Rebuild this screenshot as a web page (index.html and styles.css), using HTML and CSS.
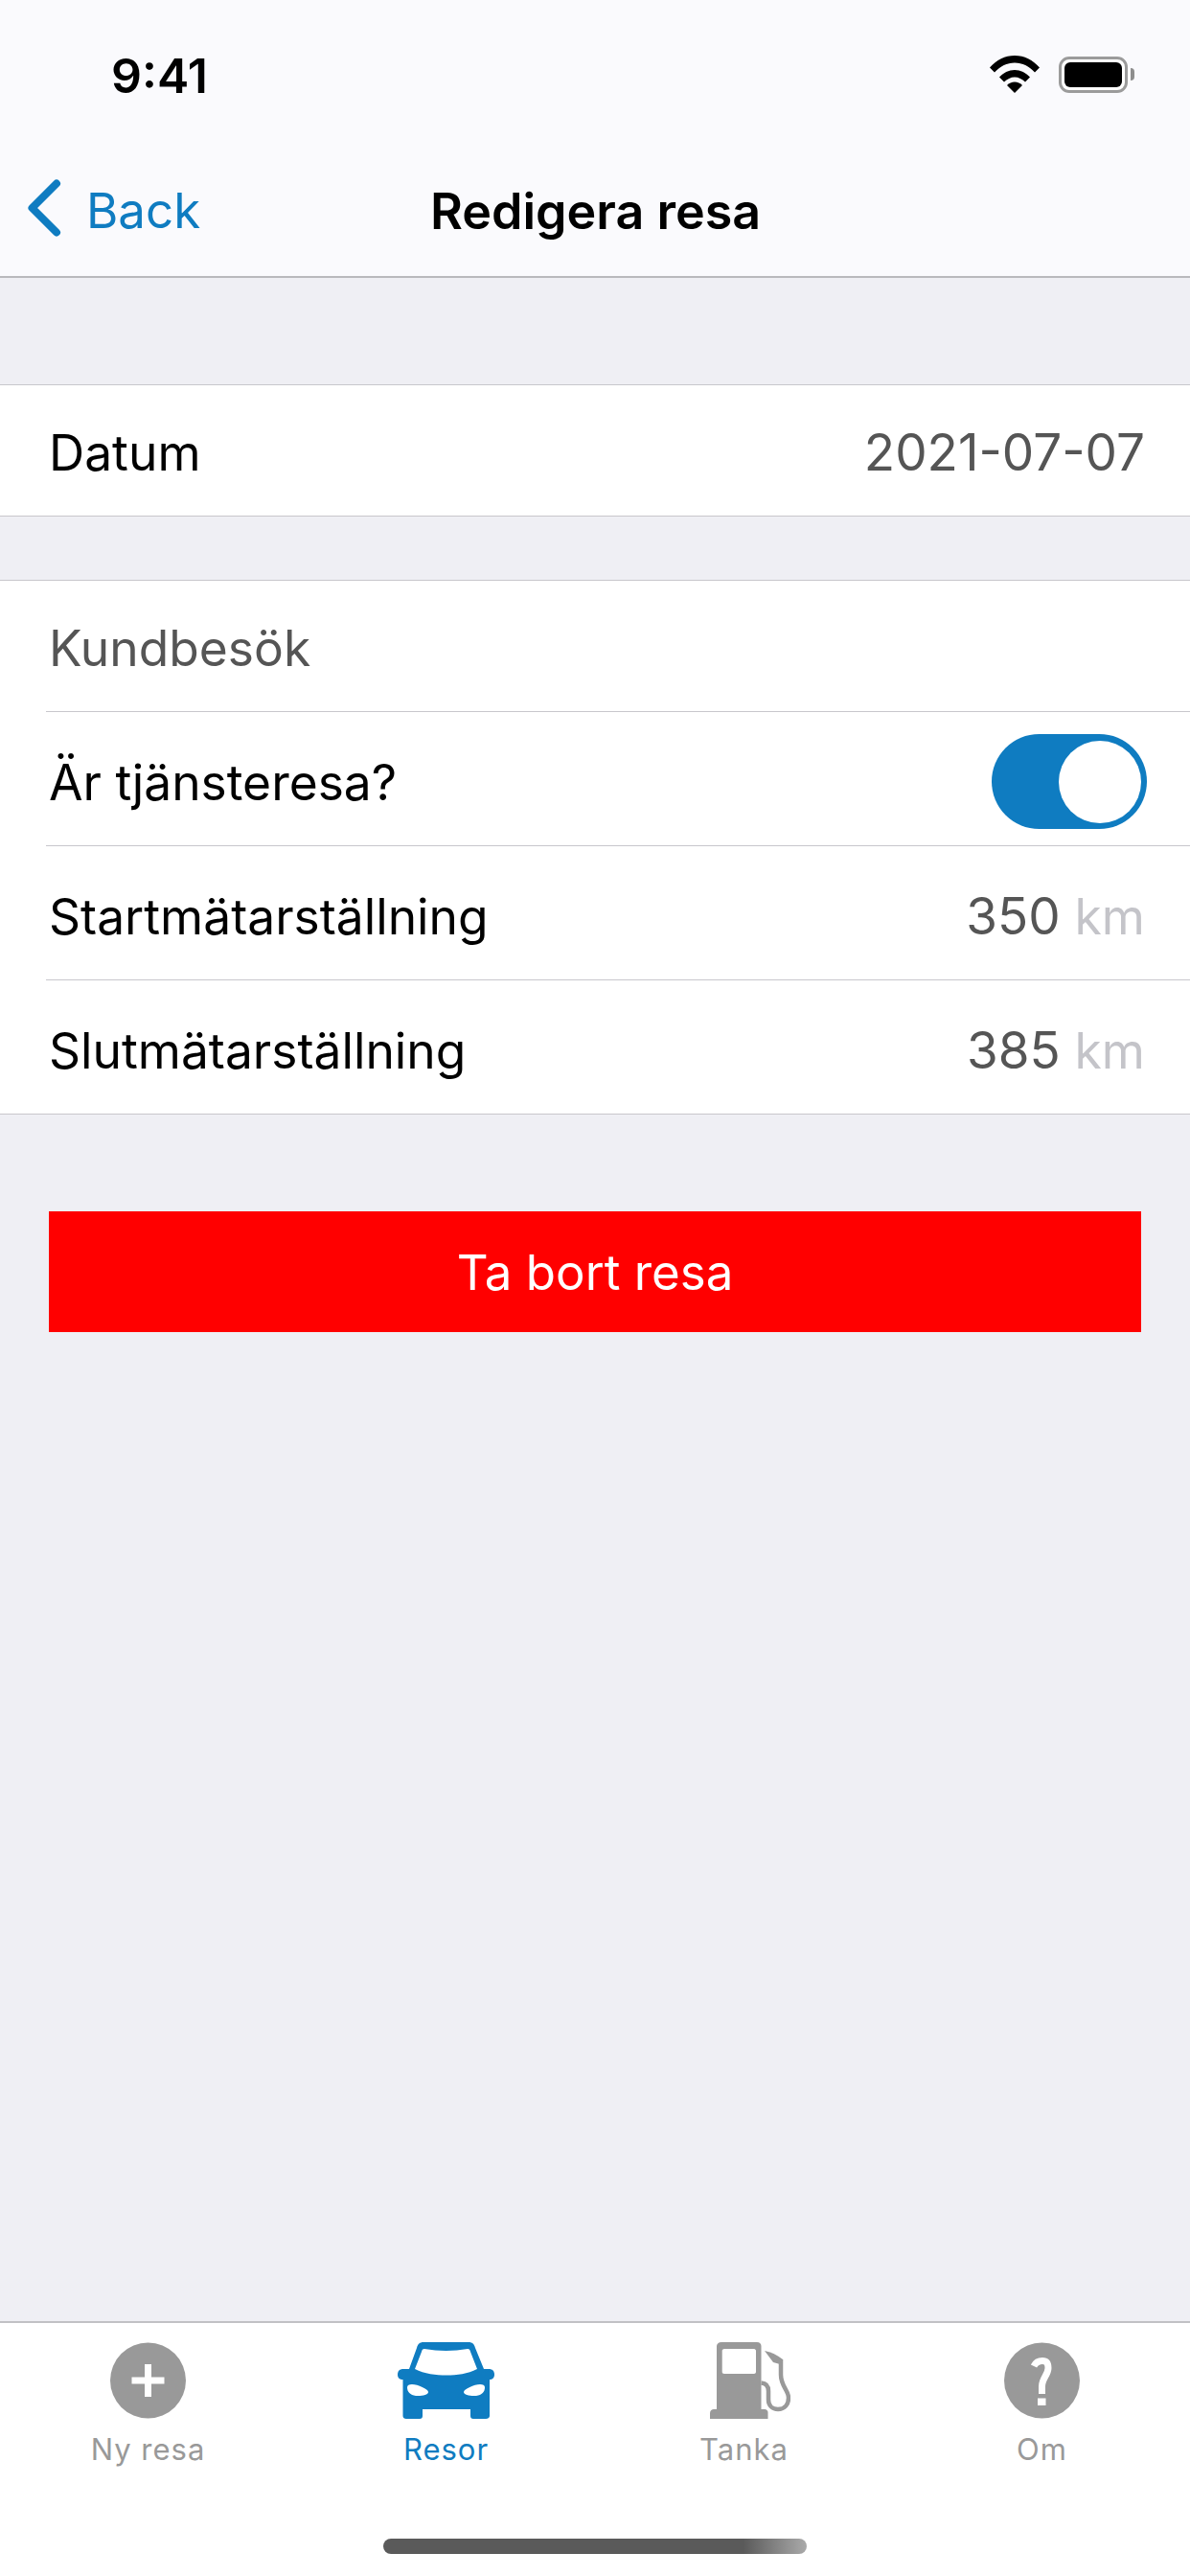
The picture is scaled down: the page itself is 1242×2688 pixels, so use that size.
FILE: index.html
```html
<!DOCTYPE html>
<html lang="sv">

<head>
    <meta charset="UTF-8" />
    <meta name="viewport" content="width=device-width, initial-scale=1.0" />
    <title>Redigera resa</title>
    <link rel="stylesheet" href="styles.css">
</head>

<body>
    <div class="page">
        <header class="top-bar">
            <div class="status-bar">
                <span class="clock">9:41</span>
                <div class="status-icons">
                    <svg class="wifi" width="52" height="39" viewBox="0 0 52 39">
                        <path d="M0 12.5C7 4.5 16 0 26 0s19 4.500 26 12.500l-5 5C41 11 34 7.500 26 7.500S11 11 5 17.500z" />
                        <path d="M10 22.500C14 18 20 15 26 15s12 3 16 7.500l-5 5C34 24.500 30 22.500 26 22.500s-8 2-11 5z" />
                        <path d="M18 31c2-2 5-3.500 8-3.500s6 1.500 8 3.500l-8 8z" />
                    </svg>
                    <div class="battery">
                        <div class="battery-fill"></div>
                    </div>
                    <div class="battery-nub"></div>
                </div>
            </div>
            <nav class="nav-bar">
                <a class="back">
                    <svg width="36" height="60" viewBox="0 0 36 60">
                        <path d="M31 4.500L5.500 30 31 55.500" />
                    </svg>
                    <span>Back</span>
                </a>
                <h1 class="nav-title">Redigera resa</h1>
            </nav>
        </header>

        <main class="content">
            <section class="group group-date">
                <div class="row row-first">
                    <span>Datum</span>
                    <span class="row-value">2021-07-07</span>
                </div>
            </section>

            <section class="group group-trip">
                <div class="row row-first">
                    <span class="placeholder">Kundbesök</span>
                </div>
                <div class="row">
                    <span>Är tjänsteresa?</span>
                    <div class="switch">
                        <div class="knob"></div>
                    </div>
                </div>
                <div class="row">
                    <span>Startmätarställning</span>
                    <span class="row-value">350 <span class="unit">km</span></span>
                </div>
                <div class="row">
                    <span>Slutmätarställning</span>
                    <span class="row-value">385 <span class="unit">km</span></span>
                </div>
            </section>

            <button class="delete-btn">Ta bort resa</button>
        </main>

        <footer class="tab-bar">
            <div class="tabs">
                <div class="tab">
                    <svg class="tab-icon" width="79" height="80" viewBox="0 0 79 80">
                        <circle cx="39.500" cy="40" r="39.500" />
                        <path class="cut" d="M36 23h7v13.500h13.500v7H43V57h-7V43.500H22.500v-7H36z" />
                    </svg>
                    <span>Ny resa</span>
                </div>
                <div class="tab tab-active">
                    <svg class="tab-icon" width="101" height="80" viewBox="0 0 101 80">
                        <path fill-rule="evenodd" d="M27 0H74C78 0 80 2 81 6L90 28H95C99 28 101 30 101 34C101 37 99 39 96 39V77C96 79 94 80 92 80H79C77 80 76 79 76 77V70H26V77C26 79 25 80 23 80H9C7 80 5.500 79 5.500 77V39C2 39 0 37 0 34C0 30 2 28 6 28H12L20 6C21 2 23 0 27 0ZM28 7C26 7 25.500 8 25 10L18 28C28 33 40 34.500 51 34.500S73 33 83 28L76 10C75.500 8 75 7 73 7C58 9.500 43 9.500 28 7ZM10 47C10 52 13 55 19 56C25 56.500 32 55 32 52C32 49 21 44 15 44C12 44 10 45 10 47ZM91 47C91 52 88 55 82 56C76 56.500 69 55 69 52C69 49 80 44 86 44C89 44 91 45 91 47Z" />
                    </svg>
                    <span>Resor</span>
                </div>
                <div class="tab">
                    <svg class="tab-icon tab-icon-pump" width="84" height="80" viewBox="0 0 84 80">
                        <path fill-rule="evenodd" d="M12 0H49C52 0 53.500 2 53.500 4V70H57C59 70 60.500 71.500 60.500 73V80H0V74C0 71.500 2 70 4 70H7V4C7 2 9 0 12 0ZM15 7C13.500 7 12.700 8 12.700 9V31C12.700 32 13.500 33 15 33H46C47 33 48 32 48 31V9C48 8 47 7 46 7Z" />
                        <path class="hose" d="M53.500 42.500C60 43 61 47 61 51V60C61 66 65 70 71 70C78 70 82 65 82 58C82 50 74 46 74 34V18" />
                        <path d="M57 9C63 10 70 13 76 18L73 23L66 21Z" />
                    </svg>
                    <span>Tanka</span>
                </div>
                <div class="tab">
                    <svg class="tab-icon" width="79" height="80" viewBox="0 0 79 80">
                        <circle cx="39.500" cy="40" r="39.500" />
                        <path class="question" d="M31 25C33 21 36 19.500 40 19.500C45 19.500 46 23 46 27C46 34 39.500 38 39.500 46V54" />
                        <rect class="cut" x="35" y="58.500" width="8.500" height="7.500" />
                    </svg>
                    <span>Om</span>
                </div>
            </div>
            <div class="home-indicator"></div>
        </footer>
    </div>
</body>

</html>
```

FILE: styles.css
```css
body {
    margin: 0;
    font-family: Inter, 'Liberation Sans', sans-serif;
    background: #efeff4;
    color: #000;
}

.page {
    width: 1242px;
    height: 2688px;
    display: flex;
    flex-direction: column;
    overflow: hidden;
}

/* Top bars */
.top-bar {
    height: 290px;
    box-sizing: border-box;
    flex-shrink: 0;
    background: #fafafd;
    border-bottom: 2px solid #b9b9bd;
}

.status-bar {
    height: 152px;
    display: flex;
    justify-content: space-between;
    align-items: flex-start;
    padding: 54px 58px 0 116px;
    box-sizing: border-box;
}

.clock {
    font-size: 50px;
    font-weight: 600;
    line-height: 50px;
}

.status-icons {
    display: flex;
    align-items: center;
    margin-top: 4px;
}

.wifi {
    fill: #000;
    margin-right: 20px;
}

.battery {
    width: 72px;
    height: 38px;
    box-sizing: border-box;
    border: 3px solid #9b9b9b;
    border-radius: 11px;
    padding: 3px;
    background: #fff;
}

.battery-fill {
    height: 100%;
    background: #000;
    border-radius: 6px;
}

.battery-nub {
    width: 4px;
    height: 13px;
    margin-left: 3px;
    background: #8e8e8e;
    border-radius: 0 6px 6px 0;
}

.nav-bar {
    position: relative;
    display: flex;
    justify-content: center;
    align-items: center;
    height: 136px;
}

.back {
    position: absolute;
    left: 28px;
    top: 38px;
    display: flex;
    align-items: center;
    gap: 26px;
    color: #0f7cc1;
    font-size: 51px;
    line-height: 60px;
}

.back svg {
    fill: none;
    stroke: #0f7cc1;
    stroke-width: 8;
    stroke-linecap: round;
    stroke-linejoin: round;
    margin-top: -6px;
}

.nav-title {
    margin: 0 0 0 1px;
    font-size: 52px;
    font-weight: 600;
}

/* Form */
.content {
    flex: 1;
}

.group {
    background: #fff;
    border-top: 1px solid #c8c7cc;
    border-bottom: 1px solid #c8c7cc;
}

.group-date {
    margin-top: 111px;
}

.group-trip {
    margin-top: 66px;
}

.row {
    height: 140px;
    box-sizing: border-box;
    margin-left: 48px;
    padding: 6px 47px 0 3px;
    display: flex;
    justify-content: space-between;
    align-items: center;
    font-size: 51.500px;
    border-top: 1px solid #c8c7cc;
}

.row-first {
    height: 136px;
    padding-top: 4px;
    border-top: none;
}

.row-value {
    color: #555;
    font-size: 53px;
}

.unit {
    color: #c4c4c9;
    font-size: 51.500px;
}

.placeholder {
    color: #555;
}

.switch {
    width: 162px;
    height: 99px;
    margin-right: -2px;
    background: #0f7cc1;
    border-radius: 50px;
    display: flex;
    justify-content: flex-end;
    align-items: center;
    padding-right: 6px;
    box-sizing: border-box;
}

.knob {
    width: 86px;
    height: 86px;
    background: #fff;
    border-radius: 50%;
}

.delete-btn {
    display: block;
    width: 1140px;
    height: 126px;
    margin: 101px 0 0 51px;
    border: none;
    background: #ff0000;
    color: #fff;
    font-family: inherit;
    font-size: 51px;
}

/* Tab bar */
.tab-bar {
    height: 266px;
    flex-shrink: 0;
    box-sizing: border-box;
    background: #fff;
    border-top: 2px solid #c1c1c5;
    display: flex;
    flex-direction: column;
    align-items: center;
}

.tabs {
    display: grid;
    grid-template-columns: repeat(4, 311px);
    width: 1244px;
    padding-top: 20px;
    height: 225px;
    box-sizing: border-box;
}

.tab {
    display: flex;
    flex-direction: column;
    align-items: center;
    color: #999;
    font-size: 31px;
    letter-spacing: 1px;
    line-height: 36px;
}

.tab-icon {
    display: block;
    fill: #999;
    margin-bottom: 14px;
}

.tab-icon-pump {
    margin-left: 13px;
}

.tab-active {
    color: #0f7cc1;
}

.tab-active .tab-icon {
    fill: #0f7cc1;
}

.cut {
    fill: #fff;
}

.question {
    fill: none;
    stroke: #fff;
    stroke-width: 7;
}

.hose {
    fill: none;
    stroke: #999;
    stroke-width: 4.500;
}

.home-indicator {
    width: 442px;
    height: 16px;
    border-radius: 8px;
    background: linear-gradient(to right, #5a5a5a 85%, #aaa);
}
```
